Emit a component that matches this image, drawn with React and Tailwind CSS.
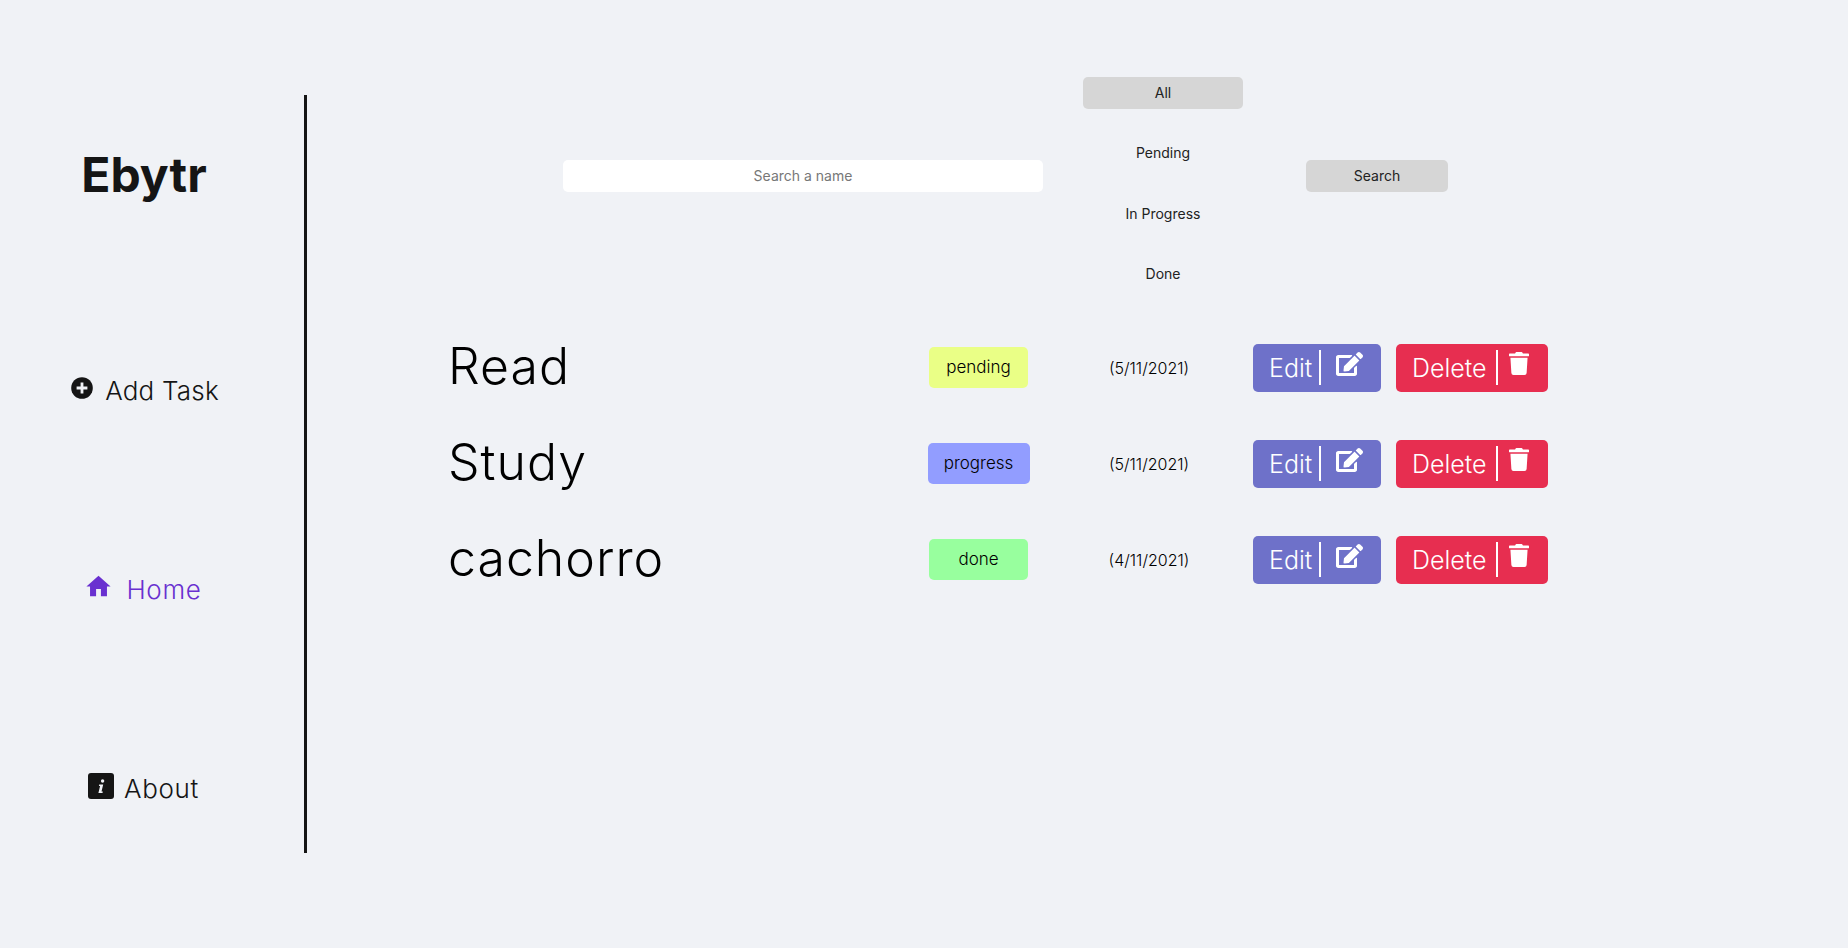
import React from 'react';
import { FaEdit, FaTrash } from 'react-icons/fa';
import { MdHome } from 'react-icons/md';

const tasks = [
  { name: 'Read', status: 'pending', date: '(5/11/2021)', color: 'bg-[#eaff86]', width: 'w-[99px]' },
  { name: 'Study', status: 'progress', date: '(5/11/2021)', color: 'bg-[#929dff]', width: 'w-[102px]' },
  { name: 'cachorro', status: 'done', date: '(4/11/2021)', color: 'bg-[#98ff9e]', width: 'w-[99px]' },
];

const filters = ['All', 'Pending', 'In Progress', 'Done'];

const PlusIcon = () => (
  <svg viewBox="0 0 22 22" className="w-[22px] h-[22px] shrink-0 mr-[12px] mb-[5px]">
    <circle cx="11" cy="11" r="10.8" fill="#151515" />
    <path d="M9.6 5.6h2.8v4h4v2.8h-4v4H9.6v-4h-4V9.6h4z" fill="#f0f2f6" />
  </svg>
);

const InfoIcon = () => (
  <svg viewBox="0 0 26 26" className="w-[26px] h-[26px] shrink-0">
    <rect width="26" height="26" rx="3" fill="#151515" />
    <circle cx="14.6" cy="8" r="1.7" fill="#f0f2f6" />
    <path d="M11.2 11.6h4l-1.7 7h1.3l-.3 1.3h-4.1l1.7-7h-1.2z" fill="#f0f2f6" />
  </svg>
);

const Sidebar = () => (
  <aside className="w-[307px] h-[758px] shrink-0 border-r-[3px] border-[#151515] flex flex-col items-center pr-[19px] text-[#151515]">
    <h1 className="text-[48px] leading-[60px] font-bold mt-[50px] mb-[165px] ml-[3px]">Ebytr</h1>
    <a className="flex items-center h-[40px] ml-[5px] text-[26px] font-light tracking-[0.2px]">
      <PlusIcon />
      Add Task
    </a>
    <a className="flex items-center h-[40px] mt-[159px] ml-[1px] text-[26px] font-light text-[#6930d0] tracking-[0.7px]">
      <MdHome className="w-[29px] h-[29px] mr-[13px] mb-[5px]" />
      Home
    </a>
    <a className="flex items-center h-[40px] mt-[159px] ml-[2px] text-[26px] font-light tracking-[0.7px]">
      <span className="mr-[10px] mb-[5px]"><InfoIcon /></span>
      About
    </a>
  </aside>
);

const Toolbar = () => (
  <div className="flex items-start pl-[256px] h-[213px]">
    <input
      placeholder="Search a name"
      className="w-[480px] h-[32px] mt-[83px] pb-[2px] bg-white rounded-[5px] text-center text-[14px] placeholder:text-[#777] outline-none"
    />
    <div className="flex flex-col gap-[28.5px] w-[160px] ml-[40px]">
      {filters.map((f, i) => (
        <button
          key={f}
          className={`h-[32px] pb-[2px] rounded-[5px] text-[14px] text-[#222] ${i === 0 ? 'bg-[#d6d6d6]' : ''}`}
        >
          {f}
        </button>
      ))}
    </div>
    <button className="w-[142px] h-[32px] mt-[83px] ml-[63px] pb-[2px] rounded-[5px] bg-[#d6d6d6] text-[14px] text-[#222]">
      Search
    </button>
  </div>
);

const TaskRow = ({ task }) => (
  <div className="grid grid-cols-[462px_137px_204px_auto] items-center h-[48px]">
    <span className="text-[50px] font-light text-black leading-none mb-[3px] tracking-[1px]">{task.name}</span>
    <span className={`${task.color} ${task.width} h-[41px] pt-[1px] justify-self-center rounded-[5px] flex items-center justify-center text-[17px] font-light text-black`}>
      {task.status}
    </span>
    <span className="text-center text-[16px] font-light text-black">{task.date}</span>
    <div className="flex gap-[15px] ml-[2px]">
      <button className="w-[128px] h-[48px] rounded-[5px] bg-[#6e71c9] text-white flex items-center pl-[16px]">
        <span className="text-[25px] font-light w-[50px] text-left mt-[2px]">Edit</span>
        <span className="w-[2px] h-[35px] bg-white" />
        <FaEdit className="w-[27px] h-[26px] ml-[15px] mb-[8px]" />
      </button>
      <button className="w-[152px] h-[48px] rounded-[5px] bg-[#e72e50] text-white flex items-center pl-[16px]">
        <span className="text-[25px] font-light w-[84px] text-left mt-[2px]">Delete</span>
        <span className="w-[2px] h-[35px] bg-white" />
        <FaTrash className="w-[20px] h-[23px] ml-[11px] mb-[9px]" />
      </button>
    </div>
  </div>
);

export default function App() {
  return (
    <div className="min-h-screen bg-[#f0f2f6] flex items-start pt-[95px] font-['Inter',sans-serif]">
      <Sidebar />
      <main className="flex-1 -mt-[18px]">
        <Toolbar />
        <div className="flex flex-col gap-[48px] pl-[141px] mt-[51px]">
          {tasks.map((t) => (
            <TaskRow key={t.name} task={t} />
          ))}
        </div>
      </main>
    </div>
  );
}
